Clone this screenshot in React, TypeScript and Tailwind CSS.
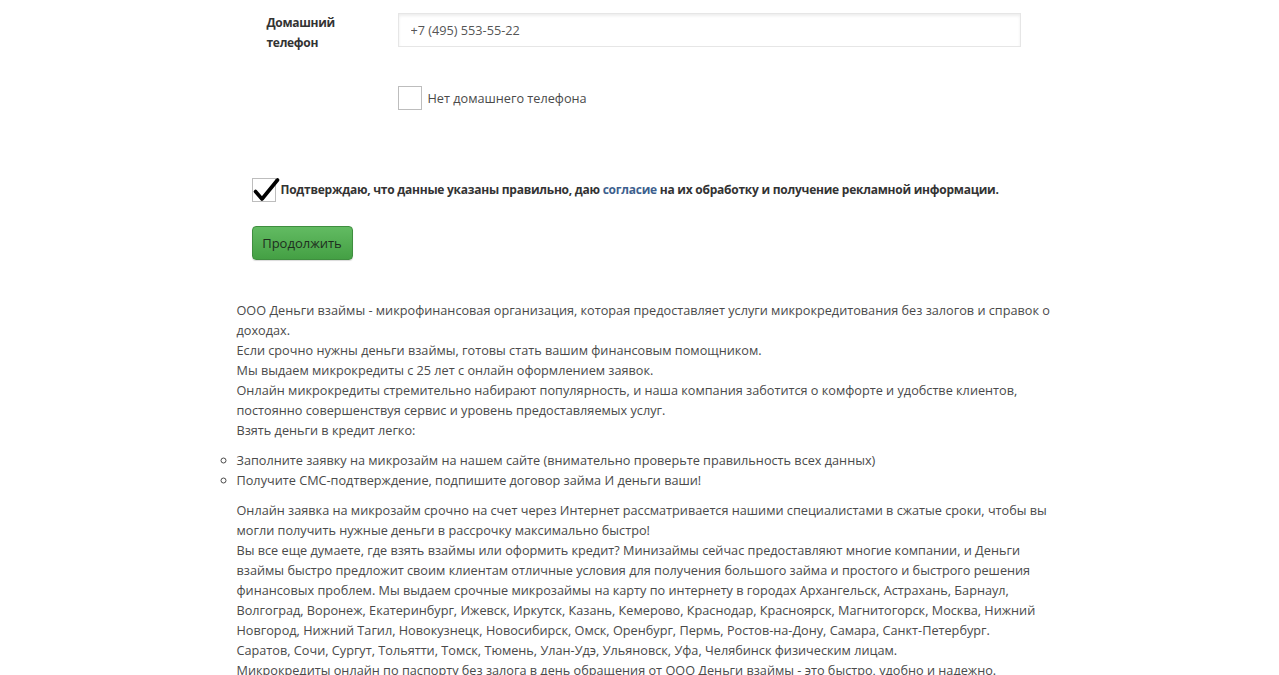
function Check() {
  return (
    <svg width="28" height="28" viewBox="0 0 28 28" className="absolute -left-px -top-[3px]">
      <path d="M3.5 15.5 L10 23 L25.5 4" fill="none" stroke="#000" strokeWidth="3.6" strokeLinecap="round" strokeLinejoin="round" />
    </svg>
  );
}

export default function App() {
  return (
    <div className="bg-white min-h-screen font-['Open_Sans',sans-serif] text-[12.7px] leading-5 text-[#4a4a4a]">
      <div className="mx-auto w-[806px] pt-[13px]">
        <div className="flex items-start">
          <div className="w-[161px] pl-[30px] font-bold text-[12px] tracking-[-0.3px] text-[#333]">
            Домашний
            <br />
            телефон
          </div>
          <input
            defaultValue="+7 (495) 553-55-22"
            className="w-[623px] h-[34px] border border-[#e6e6e6] px-3 text-[12.7px] text-[#555] shadow-[inset_0_2px_3px_rgba(0,0,0,0.07)] outline-none"
          />
        </div>

        <label className="flex items-center gap-[6px] pl-[161px] mt-[33px]">
          <span className="w-6 h-6 border border-[#bdbdbd] bg-white" />
          <span>Нет домашнего телефона</span>
        </label>

        <label className="flex items-center gap-[5px] pl-[15px] mt-[68px] font-bold text-[12px] tracking-[-0.25px] text-[#333] whitespace-nowrap">
          <span className="relative w-6 h-6 shrink-0 border border-[#bdbdbd] bg-white">
            <Check />
          </span>
          <span>
            Подтверждаю, что данные указаны правильно, даю{" "}
            <a className="text-[#3d5f8e]">согласие</a> на их обработку и получение рекламной информации.
          </span>
        </label>

        <div className="pl-[15px] mt-6">
          <button className="w-[101px] h-[34px] rounded-[4px] border border-[#3f8e3f] bg-gradient-to-b from-[#62bb62] to-[#44a044] text-[13px] text-[#1e2e1e] shadow-[0_1px_1px_rgba(0,0,0,0.15)]">
            Продолжить
          </button>
        </div>

        <div className="mt-[40px] whitespace-nowrap">
          <p>
            ООО Деньги взаймы - микрофинансовая организация, которая предоставляет услуги микрокредитования без залогов и справок о
            <br />
            доходах.
            <br />
            Если срочно нужны деньги взаймы, готовы стать вашим финансовым помощником.
            <br />
            Мы выдаем микрокредиты с 25 лет с онлайн оформлением заявок.
            <br />
            Онлайн микрокредиты стремительно набирают популярность, и наша компания заботится о комфорте и удобстве клиентов,
            <br />
            постоянно совершенствуя сервис и уровень предоставляемых услуг.
            <br />
            Взять деньги в кредит легко:
          </p>
          <ul className="list-[circle] list-outside mt-[10px]">
            <li>Заполните заявку на микрозайм на нашем сайте (внимательно проверьте правильность всех данных)</li>
            <li>Получите СМС-подтверждение, подпишите договор займа И деньги ваши!</li>
          </ul>
          <p className="mt-[10px]">
            Онлайн заявка на микрозайм срочно на счет через Интернет рассматривается нашими специалистами в сжатые сроки, чтобы вы
            <br />
            могли получить нужные деньги в рассрочку максимально быстро!
            <br />
            Вы все еще думаете, где взять взаймы или оформить кредит? Минизаймы сейчас предоставляют многие компании, и Деньги
            <br />
            взаймы быстро предложит своим клиентам отличные условия для получения большого займа и простого и быстрого решения
            <br />
            финансовых проблем. Мы выдаем срочные микрозаймы на карту по интернету в городах Архангельск, Астрахань, Барнаул,
            <br />
            Волгоград, Воронеж, Екатеринбург, Ижевск, Иркутск, Казань, Кемерово, Краснодар, Красноярск, Магнитогорск, Москва, Нижний
            <br />
            Новгород, Нижний Тагил, Новокузнецк, Новосибирск, Омск, Оренбург, Пермь, Ростов-на-Дону, Самара, Санкт-Петербург.
            <br />
            Саратов, Сочи, Сургут, Тольятти, Томск, Тюмень, Улан-Удэ, Ульяновск, Уфа, Челябинск физическим лицам.
            <br />
            Микрокредиты онлайн по паспорту без залога в день обращения от ООО Деньги взаймы - это быстро, удобно и надежно.
          </p>
        </div>
      </div>
    </div>
  );
}
